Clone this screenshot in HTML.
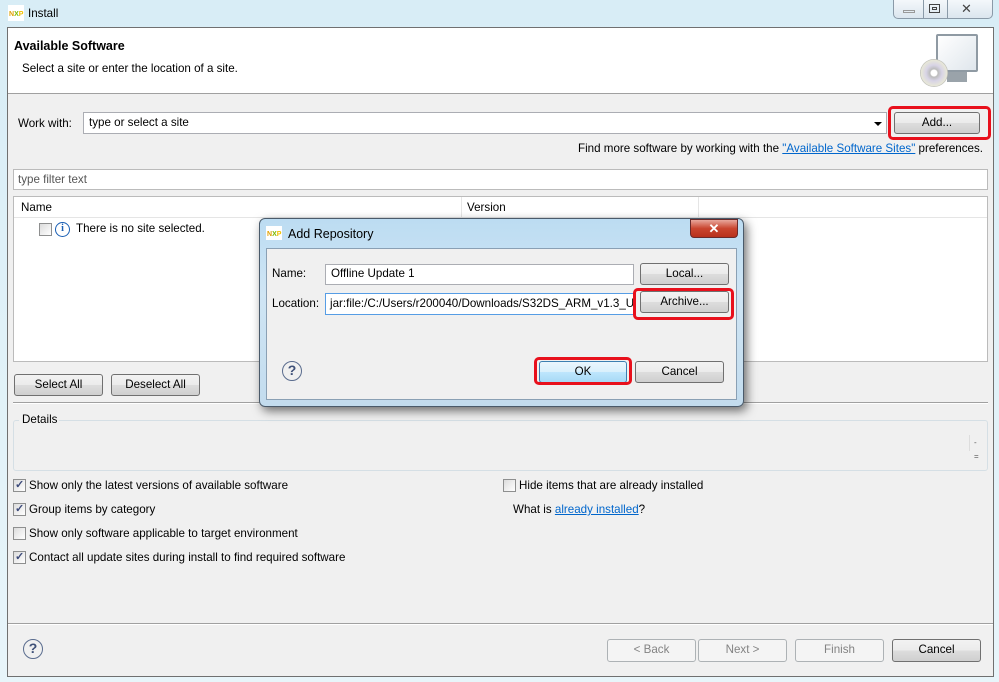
<!DOCTYPE html>
<html><head><meta charset="utf-8"><style>
*{box-sizing:border-box;margin:0;padding:0}
body{width:999px;height:682px;position:relative;overflow:hidden;font-family:"Liberation Sans",sans-serif;font-size:11.6px;color:#000;background:linear-gradient(180deg,#d8edf6,#e8f5fa)}
.a{position:absolute}
.t{position:absolute;white-space:nowrap;line-height:14px}
.btn{position:absolute;border:1px solid #707070;border-radius:3px;background:linear-gradient(#f2f2f2 0,#ebebeb 50%,#dddddd 51%,#cfcfcf 100%);text-align:center;line-height:20px;font-size:11.6px}
.dis{border-color:#adb2b5;background:#f4f4f4;color:#838383}
.in{position:absolute;background:#fff;border:1px solid #abadb3}
.cb{position:absolute;width:13px;height:13px;border:1px solid #8e8f8f;background:linear-gradient(135deg,#dcdcdc,#fff)}
.cb.c::after{content:"✓";position:absolute;left:1px;top:-2px;font-size:11px;color:#3c4a7a;font-weight:bold}
.red{position:absolute;border:3px solid #e8101c;border-radius:5px}
.help{position:absolute;width:20px;height:20px;border:1.5px solid #5a6c8e;border-radius:50%;text-align:center;line-height:17px;font-weight:bold;color:#3e5078;font-size:14px}
</style></head><body>
<div class="a" style="left:8px;top:5px;width:16px;height:16px;background:#fff"></div>
<div class="t" style="left:9px;top:8px;font-size:7px;font-weight:bold;color:#e0a000">N<span style="color:#7ab800">X</span><span style="color:#f0c000">P</span></div>
<div class="t" style="left:28px;top:7px">Install</div>
<div class="a" style="left:893px;top:0;width:100px;height:19px;border:1px solid #8a9aa8;border-top:none;border-radius:0 0 5px 5px;background:linear-gradient(#f4f8fb,#dbe6ee)"></div>
<div class="a" style="left:923px;top:0;width:1px;height:19px;background:#8a9aa8"></div>
<div class="a" style="left:947px;top:0;width:1px;height:19px;background:#8a9aa8"></div>
<div class="a" style="left:903px;top:10px;width:12px;height:3px;border:1px solid #999"></div>
<div class="a" style="left:929px;top:4px;width:11px;height:9px;border:1px solid #444"></div>
<div class="a" style="left:932px;top:7px;width:5px;height:3px;border:1px solid #444"></div>
<div class="t" style="left:961px;top:2px;font-size:13px;color:#444">✕</div>
<div class="a" style="left:7px;top:27px;width:987px;height:650px;border:1px solid #707070;background:#f0f0f0"></div>
<div class="a" style="left:8px;top:28px;width:985px;height:66px;background:#fff;border-bottom:1px solid #a0a0a0"></div>
<div class="t" style="left:14px;top:39px;font-weight:bold;font-size:12.5px">Available Software</div>
<div class="t" style="left:22px;top:62px">Select a site or enter the location of a site.</div>
<div class="a" style="left:936px;top:34px;width:42px;height:38px;border:2px solid #8f9aa3;background:linear-gradient(135deg,#fff,#dfe6ec);border-radius:2px"></div>
<div class="a" style="left:947px;top:72px;width:20px;height:10px;background:#9aa3aa"></div>
<div class="a" style="left:920px;top:59px;width:28px;height:28px;border-radius:50%;background:radial-gradient(circle,#fff 0 3px,#bbb 4px,#d8d4e6 8px,#e8e8d8 13px,#aaa 14px)"></div>
<div class="t" style="left:18px;top:117px">Work with:</div>
<div class="in" style="left:83px;top:112px;width:804px;height:22px"></div>
<div class="t" style="left:89px;top:116px">type or select a site</div>
<div class="a" style="left:874px;top:122px;width:0;height:0;border-left:4px solid transparent;border-right:4px solid transparent;border-top:4px solid #000"></div>
<div class="btn" style="left:894px;top:112px;width:86px;height:22px">Add...</div>
<div class="red" style="left:888px;top:106px;width:103px;height:34px"></div>
<div class="t" style="right:16px;top:142px">Find more software by working with the <span style="color:#0066cc;text-decoration:underline">"Available Software Sites"</span> preferences.</div>
<div class="in" style="left:13px;top:169px;width:975px;height:21px;border-color:#bbb"></div>
<div class="t" style="left:18px;top:173px;color:#555">type filter text</div>
<div class="in" style="left:13px;top:196px;width:975px;height:166px;border-color:#bbb"></div>
<div class="a" style="left:14px;top:197px;width:973px;height:21px;background:#fff;border-bottom:1px solid #e5e5e5"></div>
<div class="a" style="left:461px;top:197px;width:1px;height:21px;background:#e5e5e5"></div>
<div class="a" style="left:698px;top:197px;width:1px;height:21px;background:#e5e5e5"></div>
<div class="t" style="left:21px;top:201px">Name</div>
<div class="t" style="left:467px;top:201px">Version</div>
<div class="cb" style="left:39px;top:223px"></div>
<div class="a" style="left:55px;top:222px;width:15px;height:15px;border:1.5px solid #1a5fb4;border-radius:50%;text-align:center;font:bold 10px/12px 'Liberation Serif',serif;color:#1a5fb4">i</div>
<div class="t" style="left:76px;top:222px">There is no site selected.</div>
<div class="btn" style="left:14px;top:374px;width:89px;height:22px">Select All</div>
<div class="btn" style="left:111px;top:374px;width:89px;height:22px">Deselect All</div>
<div class="a" style="left:13px;top:402px;width:975px;height:2px;border-top:1px solid #a0a0a0;border-bottom:1px solid #fff"></div>
<div class="a" style="left:13px;top:420px;width:975px;height:51px;border:1px solid #d5dfe5;border-radius:3px"></div>
<div class="a" style="left:19px;top:413px;width:40px;height:14px;background:#f0f0f0"></div>
<div class="t" style="left:22px;top:413px">Details</div>
<div class="a" style="left:969px;top:435px;width:14px;height:16px;border-left:1px solid #ddd"></div>
<div class="t" style="left:974px;top:436px;font-size:8px;color:#555">-<br>=</div>
<div class="cb c" style="left:13px;top:479px"></div><div class="t" style="left:29px;top:479px">Show only the latest versions of available software</div>
<div class="cb c" style="left:13px;top:503px"></div><div class="t" style="left:29px;top:503px">Group items by category</div>
<div class="cb" style="left:13px;top:527px"></div><div class="t" style="left:29px;top:527px">Show only software applicable to target environment</div>
<div class="cb c" style="left:13px;top:551px"></div><div class="t" style="left:29px;top:551px">Contact all update sites during install to find required software</div>
<div class="cb" style="left:503px;top:479px"></div><div class="t" style="left:519px;top:479px">Hide items that are already installed</div>
<div class="t" style="left:513px;top:503px">What is <span style="color:#0066cc;text-decoration:underline">already installed</span>?</div>
<div class="a" style="left:8px;top:623px;width:985px;height:2px;border-top:1px solid #a0a0a0;border-bottom:1px solid #fff"></div>
<div class="help" style="left:23px;top:639px">?</div>
<div class="btn dis" style="left:607px;top:639px;width:89px;height:23px">&lt; Back</div>
<div class="btn dis" style="left:698px;top:639px;width:89px;height:23px">Next &gt;</div>
<div class="btn dis" style="left:795px;top:639px;width:89px;height:23px">Finish</div>
<div class="btn" style="left:892px;top:639px;width:89px;height:23px">Cancel</div>
<div class="a" style="left:259px;top:218px;width:485px;height:189px;border:1px solid #4a5a6a;border-radius:6px;background:linear-gradient(180deg,#bcdcf2,#cfe5f4 40%,#c3dcee);box-shadow:3px 4px 10px rgba(0,0,0,.55)"></div>
<div class="a" style="left:266px;top:226px;width:16px;height:14px;background:#fff"></div>
<div class="t" style="left:267px;top:228px;font-size:7px;font-weight:bold;color:#e0a000">N<span style="color:#7ab800">X</span><span style="color:#f0c000">P</span></div>
<div class="t" style="left:288px;top:227px;font-size:12.5px">Add Repository</div>
<div class="a" style="left:690px;top:219px;width:48px;height:19px;border:1px solid #6a2a2a;border-radius:0 0 4px 4px;background:linear-gradient(#e8a79c,#c9452f 50%,#b8311c);color:#fff;text-align:center;font:bold 13px/17px 'Liberation Sans',sans-serif">✕</div>
<div class="a" style="left:266px;top:248px;width:471px;height:152px;border:1px solid #8aa0b4;background:#f0f0f0"></div>
<div class="t" style="left:272px;top:267px">Name:</div>
<div class="in" style="left:325px;top:264px;width:309px;height:21px"></div>
<div class="t" style="left:331px;top:267px">Offline Update 1</div>
<div class="btn" style="left:640px;top:263px;width:89px;height:22px">Local...</div>
<div class="t" style="left:272px;top:297px">Location:</div>
<div class="in" style="left:325px;top:293px;width:309px;height:22px;border-color:#569de5;overflow:hidden"><span class="t" style="left:4px;top:3px">jar:file:/C:/Users/r200040/Downloads/S32DS_ARM_v1.3_Update</span></div>
<div class="btn" style="left:640px;top:291px;width:89px;height:22px">Archive...</div>
<div class="red" style="left:633px;top:288px;width:101px;height:32px"></div>
<div class="help" style="left:282px;top:361px">?</div>
<div class="btn" style="left:539px;top:361px;width:88px;height:22px;border-color:#3c7fb1;background:linear-gradient(#eaf6fd,#d9f0fc 50%,#bee6fd 51%,#a7d9f5)">OK</div>
<div class="btn" style="left:635px;top:361px;width:89px;height:22px">Cancel</div>
<div class="red" style="left:534px;top:357px;width:98px;height:28px"></div>
</body></html>
